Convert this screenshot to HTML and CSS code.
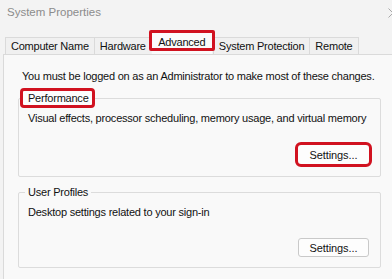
FILE: index.html
```html
<!DOCTYPE html>
<html>
<head>
<meta charset="utf-8">
<link rel="stylesheet" href="styles.css">
</head>
<body>
<div class="window">
  <div class="titlebar">
    <span class="title">System Properties</span>
    <svg class="close" width="10" height="10" viewBox="0 0 10 10"><path d="M0.5 0.5 L9.5 9.5 M9.5 0.5 L0.5 9.5" stroke="#a8a8a8" stroke-width="1" fill="none"/></svg>
  </div>
  <div class="tabs">
    <div class="tab">Computer Name</div>
    <div class="tab">Hardware</div>
    <div class="tab active">Advanced</div>
    <div class="tab">System Protection</div>
    <div class="tab">Remote</div>
  </div>
  <div class="panel">
    <p class="note">You must be logged on as an Administrator to make most of these changes.</p>
    <fieldset class="group perf">
      <legend class="hl">Performance</legend>
      <p class="desc">Visual effects, processor scheduling, memory usage, and virtual memory</p>
      <div class="actions"><button class="btn hl">Settings...</button></div>
    </fieldset>
    <fieldset class="group prof">
      <legend>User Profiles</legend>
      <p class="desc">Desktop settings related to your sign-in</p>
      <div class="actions"><button class="btn">Settings...</button></div>
    </fieldset>
  </div>
</div>
</body>
</html>
```
FILE: styles.css
```css
* { box-sizing: border-box; }
html, body { margin: 0; padding: 0; }
body {
  width: 392px;
  height: 279px;
  overflow: hidden;
  background: #f3f3f3;
  font-family: "Liberation Sans", Arial, sans-serif;
  font-size: 11px;
  letter-spacing: -0.22px;
  color: #111;
  white-space: nowrap;
}
.window { display: flex; flex-direction: column; height: 279px; }
.window > * { flex-shrink: 0; }
.titlebar {
  height: 28px;
  display: flex;
  align-items: center;
  justify-content: space-between;
  padding: 0 0 4px 7px;
}
.title { font-size: 11.5px; letter-spacing: 0; color: #8c8c8c; }
.close { margin-right: -6px; margin-top: 2px; }
.tabs {
  display: flex;
  align-items: flex-end;
  padding-left: 5px;
  height: 26px;
}
.tab {
  height: 17px;
  line-height: 16px;
  padding: 0 5px;
  border: 1px solid #dadada;
  border-bottom: none;
  border-right: none;
  background: #f0f0f0;
}
.tab:last-child { border-right: 1px solid #dadada; }
.tab.active {
  height: 21px;
  line-height: 16px;
  padding-top: 1px;
  width: 60px;
  margin: 0 0 0 1px;
  text-align: center;
  background: #fbfbfb;
  border: none;
  position: relative;
  z-index: 1;
}
.tab.active::after {
  content: "";
  position: absolute;
  left: -3px;
  right: -3px;
  top: -3px;
  bottom: 3px;
  border: 3px solid #d11220;
  border-radius: 2px;
}
.tab.active + .tab { margin-left: 1px; }
.hl { outline: 3px solid #d11220; outline-offset: 0; border-radius: 1px; }
.panel {
  flex: 1 1 auto;
  overflow: hidden;
  margin-left: 3px;
  background: #f9f9f9;
  border-top: 1px solid #dadada;
  border-left: 1px solid #dadada;
  padding: 14px 0 0 14px;
}
.note { margin: 0 0 8px 4px; line-height: 14px; }
.group {
  margin: 0;
  width: 363px;
  border: 1px solid #dcdcdc;
  border-radius: 2px;
  padding: 6px 11px 0 6px;
}
.group legend {
  padding: 0 3px;
  margin-left: 0;
  line-height: 14px;
}
.perf legend { width: 69px; padding: 0 0 0 5px; margin-left: -2px; background: #fdfdfd; }
.prof { margin-top: 8px; }
.desc { margin: 0 0 0 3px; line-height: 14px; }
.actions { display: flex; justify-content: flex-end; }
.perf .actions { padding: 20px 0 12px 0; }
.prof .actions { padding: 19px 0 10px 0; }
.btn {
  font-family: inherit;
  font-size: 11px;
  letter-spacing: -0.1px;
  color: #111;
  width: 71px;
  height: 19px;
  padding: 0;
  border: 1px solid #c9c9c9;
  border-radius: 3px;
  background: #fdfdfd;
}
.perf .btn { border-color: #fdfdfd; }
```
